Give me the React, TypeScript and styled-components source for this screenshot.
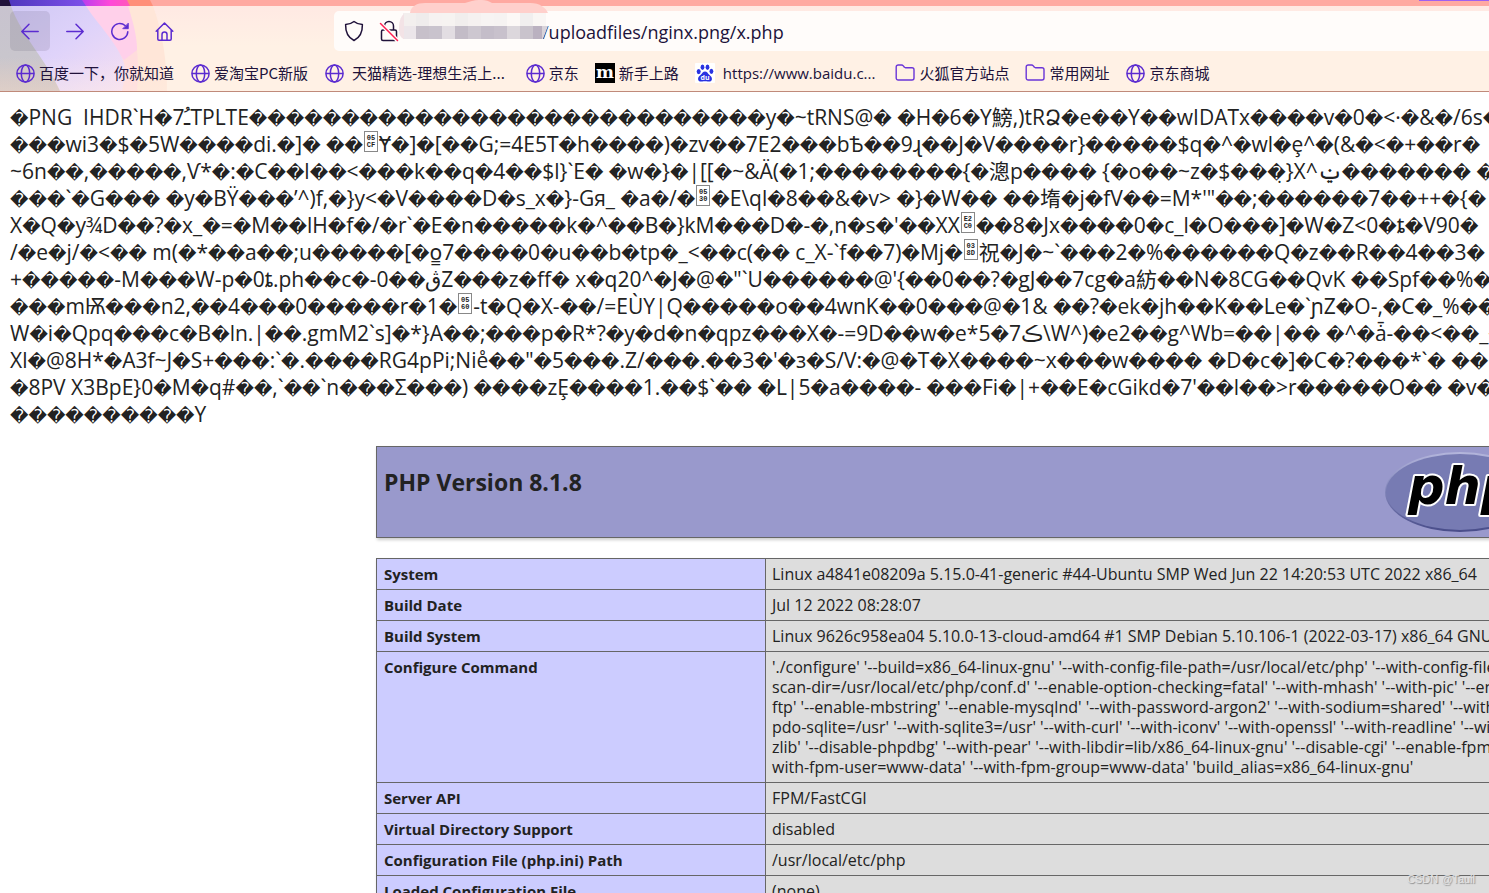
import React from "react";
import styled, { createGlobalStyle } from "styled-components";

const GlobalStyle = createGlobalStyle`
  *, *::before, *::after { box-sizing: border-box; }
  body {
    margin: 0;
    background: #fff;
    color: #222;
    font-family: "Open Sans", "Noto Sans", "Noto Sans CJK SC", sans-serif;
    overflow: hidden;
  }
`;

const Page = styled.div`
  position: relative;
  min-height: 100vh;
  max-height: 100vh;
  overflow: hidden;
`;

const Chrome = styled.header`
  position: relative;
  display: flex;
  flex-direction: column;
  background: linear-gradient(#ffe9e3 6px, #fff1e5 46px);
  border-bottom: 1px solid #c08a7a;
`;

const ThemeArt = styled.svg`
  position: absolute;
  left: 0;
  top: 0;
`;

const TabStrip = styled.div`
  display: flex;
  justify-content: flex-end;
  height: 6px;
  background: #ffa9a1;
`;

const TabEdge = styled.div`
  width: 70px;
  height: 1px;
  background: #a060f0;
`;

const NavBar = styled.nav`
  position: relative;
  display: flex;
  align-items: center;
  gap: 5px;
  padding: 5px 0 5px 10px;
`;

const NavButton = styled.button<{ $active?: boolean }>`
  display: flex;
  align-items: center;
  justify-content: center;
  width: 40px;
  height: 40px;
  padding: 0;
  border: 0;
  border-radius: 5px;
  color: #5b2bd0;
  background: ${(p) => (p.$active ? "rgba(60, 50, 70, 0.12)" : "transparent")};
`;

const UrlBar = styled.div`
  display: flex;
  flex: 1;
  align-items: center;
  height: 40px;
  margin-left: 144px;
  padding-left: 9px;
  border-radius: 5px 0 0 5px;
  background: #fffcfa;
  color: #20123a;
`;

const UrlIcon = styled.span`
  display: flex;
  width: 35px;
`;

const Mosaic = styled.svg`
  position: absolute;
  left: 396px;
  top: 0;
  z-index: 1;
`;

const UrlInput = styled.input`
  flex: 1;
  min-width: 0;
  height: 26px;
  margin-left: 142px;
  padding: 1px 0 0;
  border: 0;
  outline: 0;
  background: transparent;
  color: #20123a;
  font: 18px/24px "Open Sans", "Noto Sans", sans-serif;
`;

const Bookmarks = styled.div`
  position: relative;
  display: flex;
  align-items: center;
  gap: 16px;
  height: 35px;
  padding: 0 0 1px 15px;
`;

const Bookmark = styled.a<{ $spaced?: boolean }>`
  display: flex;
  align-items: center;
  gap: ${(p) => (p.$spaced ? 8 : 4)}px;
  padding-right: ${(p) => (p.$spaced ? 4 : 0)}px;
  color: #20123a;
  font: 15px/22px "Noto Sans CJK SC", sans-serif;
  text-decoration: none;
  white-space: nowrap;
`;

const LatinLabel = styled.span`
  font-family: "Open Sans", sans-serif;
`;

const Dump = styled.section`
  padding: 12px 0 0 10px;
  font-size: 21px;
  line-height: 27px;
`;

const DumpLine = styled.div`
  display: flex;
  align-items: baseline;
  height: 27px;
  white-space: pre;
`;

const Unknown = styled.span`
  font-family: "DejaVu Sans", sans-serif;
  font-size: 18px;
`;

const HexBox = styled.span`
  display: inline-flex;
  flex: none;
  flex-direction: column;
  align-self: flex-start;
  align-items: center;
  width: 14px;
  height: 21px;
  margin: 0 1px;
  padding-top: 3px;
  border: 1px solid #888;
  font: bold 7px/7px "Liberation Mono", monospace;
`;

const Info = styled.main`
  display: flex;
  flex-direction: column;
  gap: 20px;
  width: 1168px;
  margin: 18px 0 0 376px;
`;

const Banner = styled.div`
  display: flex;
  justify-content: space-between;
  height: 92px;
  padding: 5px 8px 0 7px;
  border: 1px solid #666;
  background: #9999cc;
  box-shadow: 1px 2px 3px #ccc;
`;

const Title = styled.h1`
  margin: 14px 0 0;
  font-size: 23px;
  line-height: 32px;
`;

const InfoTable = styled.table`
  width: 100%;
  border-collapse: collapse;
  table-layout: fixed;
  line-height: 20px;
  box-shadow: 1px 2px 3px #ccc;
`;

const Label = styled.th`
  width: 389px;
  padding: 5px 7px;
  border: 1px solid #666;
  background: #ccccff;
  font-size: 15px;
  text-align: left;
  vertical-align: top;
`;

const Value = styled.td`
  padding: 5px 6px;
  border: 1px solid #666;
  background: #dddddd;
  font-size: 16px;
  vertical-align: top;
  white-space: nowrap;
`;

const ValueLine = styled.span`
  display: block;
`;

const Watermark = styled.div`
  position: absolute;
  right: 14px;
  bottom: 6px;
  color: #e4e4e4;
  font: 11px/16px "Liberation Sans", sans-serif;
  text-shadow: 1px 1px 1px #888;
`;

const Globe = () => (
  <svg width="20" height="20" viewBox="0 0 20 20" fill="none" stroke="#5b2bd0" strokeWidth="1.5">
    <circle cx="10.5" cy="10.5" r="8.6" />
    <ellipse cx="10.5" cy="10.5" rx="4.2" ry="8.6" />
    <path d="M2 10.5h17" />
  </svg>
);

const Folder = () => (
  <svg width="20" height="20" viewBox="0 0 20 20" fill="none" stroke="#6a35d8" strokeWidth="1.4">
    <path d="M1.2 4a2 2 0 0 1 2-2h3.4c.8 0 1.2.3 1.7.9l1.1 1.3c.3.4.6.5 1.1.5H17a2 2 0 0 1 2 2V15a2 2 0 0 1-2 2H3.200a2 2 0 0 1-2-2z" />
  </svg>
);

const Mozilla = () => (
  <svg width="20" height="20" viewBox="0 0 20 20">
    <rect width="20" height="20" fill="#000" />
    <text x="10" y="15" textAnchor="middle" fill="#fff" fontFamily="DejaVu Serif, serif" fontWeight="bold" fontSize="17">m</text>
  </svg>
);

const Paw = () => (
  <svg width="20" height="20" viewBox="0 0 20 20">
    <rect width="20" height="20" rx="1" fill="#fff" />
    <g fill="#2932e1">
      <ellipse cx="3.700" cy="8.600" rx="2" ry="2.600" />
      <ellipse cx="7.500" cy="4.200" rx="1.900" ry="2.700" />
      <ellipse cx="12.500" cy="4.200" rx="1.900" ry="2.700" />
      <ellipse cx="16.400" cy="8.300" rx="1.900" ry="2.600" />
      <path d="M10 8.400c2 0 2.800 1.900 4.200 3.300 1.500 1.400 3.100 2.500 2.700 4.700-.4 2.300-2.600 2.300-4.200 2.100-1.900-.3-3.500-.3-5.400 0-1.700.2-3.800.2-4.200-2.100-.4-2.200 1.200-3.300 2.700-4.700C7.200 10.300 8 8.400 10 8.400z" />
    </g>
    <text x="10" y="17" textAnchor="middle" fill="#fff" fontFamily="Open Sans, sans-serif" fontWeight="bold" fontSize="7">du</text>
  </svg>
);

const navStroke = { fill: "none", stroke: "currentColor", strokeWidth: 1.5, strokeLinecap: "round", strokeLinejoin: "round" } as const;

const PhpLogo = () => (
  <svg width="150" height="80" viewBox="0 0 150 80" role="img" aria-label="PHP logo">
    <defs>
      <linearGradient id="rim" x1="0" y1="0" x2="0" y2="1">
        <stop offset="0" stopColor="#b4b6dc" />
        <stop offset=".5" stopColor="#8084b8" />
        <stop offset="1" stopColor="#484c89" />
      </linearGradient>
    </defs>
    <ellipse cx="75" cy="40" rx="75" ry="40" fill="url(#rim)" />
    <ellipse cx="75" cy="40" rx="74" ry="38" fill="#777bb3" />
    <text x="23" y="52" fontFamily="DejaVu Sans, sans-serif" fontSize="51" fontWeight="bold" fontStyle="italic" stroke="#fff" strokeWidth="4" strokeLinejoin="round" paintOrder="stroke">php</text>
  </svg>
);

const dump: string[] = [
  "�PNG  IHDR`H�7\u0640\u064FTPLTE" + "�".repeat(28) + "y�~tRNS@� �H�6�Y鰟,)tRՁ�e��Y��wIDATx����v�0�<·�&�/6s�",
  "���wi3�$�5W����di.�]� ��<05CF>Ɏ�]�[��G;=4E5T�h����)�zv��7E2���bѢ��9ɻ��J�V����r}�����$q�^�wl�ȩ^�(&�<�+��r�",
  "~6n��,�����,Ѵ*�:�C��l��<���k��q�4��$l}`E� �w�}�|[[�~&Ä(�1;��������{�漗p���� {�o��~z�$���\u0323}X^ݔ������� �",
  "���`�G��� �y�BŸ���’^)f,�}y<�V����D�s_x�}-Gя_ �a�/�<0530>�E\\ql�8��&�v> �}�W�� ��堶�j�fV��=M*'\"��;������7��++�{�",
  "X�Q�y¾D��?�x_�=�M��lH�f�/�r`�E�n�����k�^��B�}kM���D�-�,n�s�'��XX<E2C0>��8�Jx����0�c_l�O���]�W�Z<0�ȶ�V90�",
  "/�e�j/�<�� m(�*��a��;u�����[�o\u03337����0�u��b�tp�_<��c(�� c_X-`f��7)�Mj�<038D>祝�J�~`���2�%������Q�z��R��4��3�",
  "+�����-M���W-p�0ȶ.ph��c�-0��ڨZ���z�ff� x�q20^�J�@�\"`U������@'{��0��?�gJ��7cg�a紡��N�8CG��QvK ��Spf��%�",
  "���mѬ���n2,��4���0�����r�1�<0560>-t�Q�X-��/=EÙY|Q�����o��4wnK��0���@�1& ��?�ek�jh��K��Le�`ɲZ�O-,�C�_%��",
  "W�i�Qpq���c�B�ln.|��.gmM2`s]�*}A��;���p�R*?�y�d�n�qpz���X�-=9D��w�e*5�7ڪ\\W^)�e2��g^Wb=��|�� �^�ǡ-��<��_�",
  "Xl�@8H*�A3f~J�S+���:`�.����RG4pPi;Nie\u030A��\"�5���.Z/���.��3�'�з�S/V:�@�T�X����~x���w���� �D�c�]�C�?���*`� ��",
  "�8PV X3BpE}0�M�q#��,`��`n���Σ���) ����zȨ����1.��$`�� �L|5�a����- ���Fi�|+��E�cGikd�7'��l��>r�����O�� �v�",
  "�".repeat(10) + "Y",
];

const renderDump = (line: string) =>
  line.split(/(�+|<[0-9A-F]{4}>)/).filter(Boolean).map((run, i) => {
    if (run[0] === "�") return <Unknown key={i}>{run}</Unknown>;
    if (/^<[0-9A-F]{4}>$/.test(run))
      return (
        <HexBox key={i}>
          <span>{run.slice(1, 3)}</span>
          <span>{run.slice(3, 5)}</span>
        </HexBox>
      );
    return <span key={i}>{run}</span>;
  });

const rows: [string, string[]][] = [
  ["System", ["Linux a4841e08209a 5.15.0-41-generic #44-Ubuntu SMP Wed Jun 22 14:20:53 UTC 2022 x86_64"]],
  ["Build Date", ["Jul 12 2022 08:28:07"]],
  ["Build System", ["Linux 9626c958ea04 5.10.0-13-cloud-amd64 #1 SMP Debian 5.10.106-1 (2022-03-17) x86_64 GNU/Linux"]],
  ["Configure Command", [
    "'./configure' '--build=x86_64-linux-gnu' '--with-config-file-path=/usr/local/etc/php' '--with-config-file-",
    "scan-dir=/usr/local/etc/php/conf.d' '--enable-option-checking=fatal' '--with-mhash' '--with-pic' '--enable-",
    "ftp' '--enable-mbstring' '--enable-mysqlnd' '--with-password-argon2' '--with-sodium=shared' '--with-",
    "pdo-sqlite=/usr' '--with-sqlite3=/usr' '--with-curl' '--with-iconv' '--with-openssl' '--with-readline' '--with-",
    "zlib' '--disable-phpdbg' '--with-pear' '--with-libdir=lib/x86_64-linux-gnu' '--disable-cgi' '--enable-fpm' '--",
    "with-fpm-user=www-data' '--with-fpm-group=www-data' 'build_alias=x86_64-linux-gnu'",
  ]],
  ["Server API", ["FPM/FastCGI"]],
  ["Virtual Directory Support", ["disabled"]],
  ["Configuration File (php.ini) Path", ["/usr/local/etc/php"]],
  ["Loaded Configuration File", ["(none)"]],
];

const mosaicTop = ["#f3efee", "#efecec", "#f6f2f1", "#f6f3f1", "#f1eeed", "#f5f1f0", "#f7f4f3", "#f6f3f2", "#fcf8f6", "#f1efef", "#f9f6f4"];
const mosaicBottom = ["#ece6ea", "#c7c0ca", "#c9c3cd", "#e2dde2", "#c3bcc7", "#cdc7d0", "#c4bdc9", "#c8c1cc", "#dcd7dc", "#c9c3cc"];

export default function App() {
  return (
    <Page>
      <GlobalStyle />
      <Chrome>
        <TabStrip><TabEdge /></TabStrip>
        <ThemeArt width="180" height="91" viewBox="0 0 180 91" aria-hidden="true">
          <defs>
            <linearGradient id="violet"><stop offset="0" stopColor="#4a35b8" /><stop offset="1" stopColor="#7d50ea" /></linearGradient>
            <linearGradient id="magenta"><stop offset="0" stopColor="#b03cf0" /><stop offset=".6" stopColor="#b03cf0" /><stop offset=".85" stopColor="#ff48d8" /><stop offset="1" stopColor="#ff58b8" /></linearGradient>
            <linearGradient id="lilac" x1="0" y1="0" x2="1" y2="1"><stop offset="0" stopColor="#cfc8f4" /><stop offset=".5" stopColor="#dfd3fa" /><stop offset="1" stopColor="#f6dff2" /></linearGradient>
            <linearGradient id="shade" x1="0" y1="0" x2="0" y2="1"><stop offset="0" stopColor="#c8c3cf" /><stop offset=".6" stopColor="#c9c6cd" /><stop offset="1" stopColor="#d0c0bb" /></linearGradient>
            <linearGradient id="fade" x1="0" y1="0" x2="0" y2="1"><stop offset=".6" stopColor="#fff1e5" stopOpacity="0" /><stop offset="1" stopColor="#fff1e5" stopOpacity=".3" /></linearGradient>
          </defs>
          <path d="M0 0h150l3 6H0z" fill="#ff8f78" />
          <path d="M0 0h127l3 6H0z" fill="url(#magenta)" />
          <path d="M0 0h82l4 6H0z" fill="url(#violet)" />
          <path d="M0 0h9l2 6H0z" fill="#20123a" />
          <path d="M0 6h153c9 24 14 55 14 85H0z" fill="#ffe6d8" />
          <path d="M0 6h128c8 24 12 55 9 85H0z" fill="#ffdcdd" />
          <path d="M85 6h43c5 16 9 30 9 44L124 60z" fill="#ffd0ea" />
          <path d="M0 6h86c10 16 30 36 37 54 4 10 1 20-1 31H0z" fill="url(#lilac)" />
          <path d="M0 6h11c10 29 36 55 49 85H0z" fill="url(#shade)" />
          <path d="M0 6h180v85H0z" fill="url(#fade)" />
        </ThemeArt>
        <Mosaic width="156" height="52" viewBox="0 0 156 52" aria-hidden="true">
          <path d="M14 13c1-7 7-10 15-10h40C78 0 88-2 96 3h38c10 0 16 5 18 10z" fill="#ffd0cc" />
          {mosaicTop.map((c, i) => <rect key={i} x={7 + i * 13} y="13" width="13" height="13" fill={c} />)}
          {mosaicBottom.map((c, i) => <rect key={i} x={7 + i * 13} y="26" width="13" height="13" fill={c} />)}
          <path d="M3 30c0-8 1-13 5-16v25c-3-1-5-4-5-9z" fill="#f3e3e6" />
          <path d="M137 26h9v13h-9z" fill="#bab1c0" />
          <path d="M146 26h6l-5 13h-1z" fill="#d8d3d9" />
        </Mosaic>
        <NavBar aria-label="Navigation">
          <NavButton $active aria-label="Back">
            <svg width="20" height="20" viewBox="0 0 20 20" {...navStroke}><path d="M18.200 10.500H2M9 3.300L1.800 10.500 9 17.700" /></svg>
          </NavButton>
          <NavButton aria-label="Forward">
            <svg width="20" height="20" viewBox="0 0 20 20" {...navStroke}><path d="M1.800 10.500H18M11 3.300l7.200 7.200-7.200 7.200" /></svg>
          </NavButton>
          <NavButton aria-label="Reload">
            <svg width="20" height="20" viewBox="0 0 20 20" {...navStroke}>
              <path d="M17.800 10.800a8 8 0 1 1-2.700-6.300" />
              <path d="M18.300 2.500v5.200h-5.200z" fill="currentColor" strokeWidth=".8" />
            </svg>
          </NavButton>
          <NavButton aria-label="Home">
            <svg width="20" height="20" viewBox="0 0 20 20" {...navStroke}>
              <path d="M1.200 10.300L9.500 2l8.300 8.300M2.800 9v9a1.200 1.200 0 0 0 1.200 1.200h11a1.200 1.200 0 0 0 1.200-1.200V9M7 19v-5.500a2.500 2.500 0 0 1 5 0V19" />
            </svg>
          </NavButton>
          <UrlBar>
            <UrlIcon>
              <svg width="22" height="22" viewBox="0 0 22 22" {...navStroke}>
                <path d="M11 1.500c2.200 1.900 4.900 2.800 8.400 3C19.600 12.500 17 17.500 11 20.500 5 17.500 2.400 12.500 2.600 4.500c3.500-.2 6.200-1.100 8.400-3z" />
              </svg>
            </UrlIcon>
            <svg width="22" height="22" viewBox="0 0 22 22" {...navStroke}>
              <path d="M6.500 10V6a4.500 4.500 0 0 1 9 0v4M5 10h12a1.500 1.500 0 0 1 1.500 1.500v7.500a1.500 1.500 0 0 1-1.500 1.500H5A1.500 1.500 0 0 1 3.500 19v-7.500A1.500 1.500 0 0 1 5 10z" />
              <path d="M2.500 3.500l17 17" stroke="#fffcfa" strokeWidth="4" />
              <path d="M2.500 3.500l17 17" stroke="#ff1f52" />
            </svg>
            <UrlInput aria-label="Address" defaultValue="/uploadfiles/nginx.png/x.php" />
          </UrlBar>
        </NavBar>
        <Bookmarks>
          <Bookmark href="#"><Globe />百度一下，你就知道</Bookmark>
          <Bookmark href="#"><Globe />爱淘宝PC新版</Bookmark>
          <Bookmark href="#" $spaced><Globe />天猫精选-理想生活上...</Bookmark>
          <Bookmark href="#"><Globe />京东</Bookmark>
          <Bookmark href="#"><Mozilla />新手上路</Bookmark>
          <Bookmark href="#" $spaced><Paw /><LatinLabel>https://www.baidu.c...</LatinLabel></Bookmark>
          <Bookmark href="#"><Folder />火狐官方站点</Bookmark>
          <Bookmark href="#"><Folder />常用网址</Bookmark>
          <Bookmark href="#"><Globe />京东商城</Bookmark>
        </Bookmarks>
      </Chrome>
      <Dump>
        {dump.map((line, i) => <DumpLine key={i}>{renderDump(line)}</DumpLine>)}
      </Dump>
      <Info>
        <Banner>
          <Title>PHP Version 8.1.8</Title>
          <PhpLogo />
        </Banner>
        <InfoTable>
          <tbody>
            {rows.map(([label, lines]) => (
              <tr key={label}>
                <Label scope="row">{label}</Label>
                <Value>{lines.map((l) => <ValueLine key={l}>{l}</ValueLine>)}</Value>
              </tr>
            ))}
          </tbody>
        </InfoTable>
      </Info>
      <Watermark>CSDN @Tauil</Watermark>
    </Page>
  );
}
